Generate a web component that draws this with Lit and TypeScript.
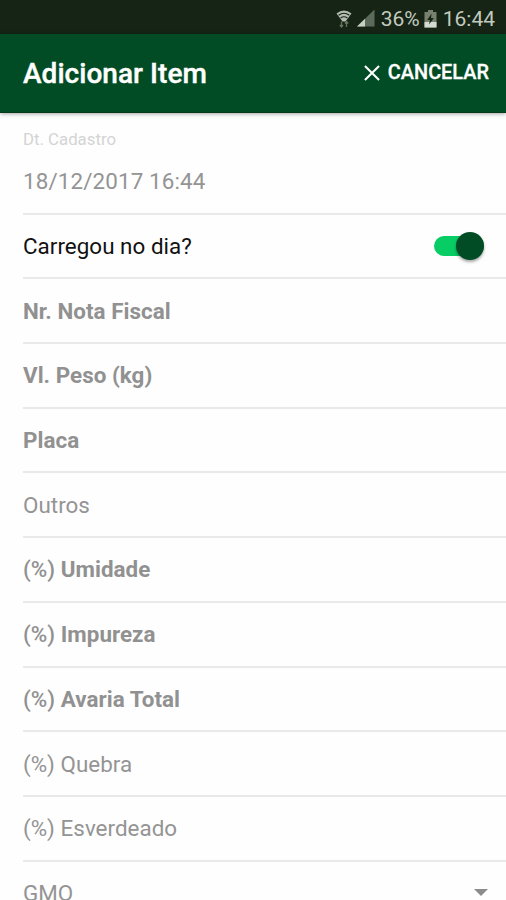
import { LitElement, html, css } from "lit";
import { customElement, property } from "lit/decorators.js";
import { classMap } from "lit/directives/class-map.js";

@customElement("status-bar")
class StatusBar extends LitElement {
  static styles = css`
    :host {
      display: flex;
      align-items: center;
      justify-content: flex-end;
      height: 34px;
      box-sizing: border-box;
      padding: 3px 11px 0 0;
      background: #152414;
      color: #c3cabf;
      font-size: 21px;
      line-height: 30px;
    }
    svg { display: block; flex: none; }
    .wifi { margin-right: 5px; }
    .signal { margin: 0 6px 2px 0; }
    .battery { margin: 0 6px 0 4px; }
  `;
  render() {
    return html`
      <svg class="wifi" width="16" height="20" viewBox="0 0 16 20">
        <path d="M0.500 4.500Q8 -1.500 15.500 4.500L9.500 12.500H6.500Z" fill="#b4bbb0" />
        <path d="M2.600 6.200Q8 2.200 13.400 6.200M4.600 9Q8 6.400 11.400 9" stroke="#152414" stroke-width="1.1" fill="none" />
        <path d="M5.500 12.500v5.500M3.800 16l1.700 2 1.500-2M10.500 18v-5.500M9 14.500l1.500-2 1.700 2" stroke="#68745f" stroke-width="1.3" fill="none" />
      </svg>
      <svg class="signal" width="18" height="18" viewBox="0 0 18 18">
        <path d="M0 17.500L17.500 0.500V17.500Z" fill="#5c6a5b" />
        <path d="M0 17.500L8 9.700V17.500Z" fill="#c8cfc5" />
      </svg>
      <span>36%</span>
      <svg class="battery" width="13" height="18" viewBox="0 0 13 18">
        <path d="M4 0h5v2h3.500v15.500h-12V2H4Z" fill="#78816f" />
        <path d="M0.500 12h12v5.500h-12Z" fill="#d5dbd2" />
        <path d="M7.600 3.500L3.200 10h2.700l-.8 4.500L9.800 8H7Z" fill="#152414" />
      </svg>
      <span>16:44</span>
    `;
  }
}

@customElement("form-row")
class FormRow extends LitElement {
  @property() label = "";
  @property({ type: Boolean }) required = false;
  @property({ type: Boolean }) active = false;

  static styles = css`
    :host {
      display: flex;
      align-items: center;
      justify-content: space-between;
      height: 64.7px;
      box-sizing: border-box;
      margin-left: 23px;
      padding-right: 22px;
      border-bottom: 2px solid #e9e9e9;
    }
    .label {
      color: #949494;
      font-size: 22.4px;
      line-height: 30px;
      letter-spacing: 0.03px;
      white-space: nowrap;
    }
    .required { font-weight: 700; color: #919191; }
    .active { color: #111; }
    .prefix { font-weight: 500; }
  `;
  render() {
    const prefix = this.label.startsWith("(%) ") ? "(%) " : "";
    const rest = this.label.slice(prefix.length);
    return html`
      <span class=${classMap({ label: true, required: this.required, active: this.active })}
        >${prefix && this.required ? html`<span class="prefix">${prefix}</span>` : prefix}${rest}</span
      >
      <slot></slot>
    `;
  }
}

@customElement("app-root")
class AppRoot extends LitElement {
  static styles = css`
    :host {
      display: block;
      height: 900px;
      overflow: hidden;
      background: #fefefe;
      font-family: Roboto, "Liberation Sans", sans-serif;
    }
    header {
      position: relative;
      display: flex;
      align-items: center;
      justify-content: space-between;
      height: 79px;
      box-sizing: border-box;
      padding: 0 17px 0 23px;
      background: #024c25;
      color: #fff;
      border-bottom: 1px solid #083b1c;
      box-shadow: 0 1px 4px rgba(0, 0, 0, 0.35);
    }
    h1 {
      margin: 0;
      padding-top: 2px;
      font-size: 28px;
      font-weight: 500;
      line-height: 36px;
      letter-spacing: 0.04px;
      -webkit-text-stroke: 0.4px #fff;
    }
    .cancel {
      display: flex;
      align-items: center;
      gap: 8px;
      padding: 0;
      border: 0;
      background: none;
      color: #fff;
      font: 500 19.9px/28px Roboto, sans-serif;
      -webkit-text-stroke: 0.3px #fff;
    }
    .date {
      height: 101.7px;
      box-sizing: border-box;
      margin-left: 23px;
      padding-top: 14px;
      border-bottom: 2px solid #e9e9e9;
    }
    .caption { color: #d4d4d4; font-size: 16.800px; line-height: 24px; }
    .value { margin-top: 15px; color: #949494; font-size: 22.400px; line-height: 30px; letter-spacing: 0.12px; }
    .toggle {
      display: flex;
      align-items: center;
      justify-content: flex-end;
      width: 50px;
      height: 20px;
      border-radius: 10px;
      background: #08cc64;
    }
    .thumb {
      flex: none;
      width: 28px;
      height: 28px;
      border-radius: 50%;
      background: #024c25;
      box-shadow: 0 2px 3px rgba(0, 0, 0, 0.35);
    }
    .arrow {
      margin-right: -4px;
      border: 7px solid transparent;
      border-top-color: #8c8c8c;
      border-bottom: 0;
    }
  `;
  private fields = [
    { label: "Nr. Nota Fiscal", required: true },
    { label: "Vl. Peso (kg)", required: true },
    { label: "Placa", required: true },
    { label: "Outros", required: false },
    { label: "(%) Umidade", required: true },
    { label: "(%) Impureza", required: true },
    { label: "(%) Avaria Total", required: true },
    { label: "(%) Quebra", required: false },
    { label: "(%) Esverdeado", required: false },
  ];
  render() {
    return html`
      <status-bar></status-bar>
      <header>
        <h1>Adicionar Item</h1>
        <button class="cancel">
          <svg width="16" height="16" viewBox="0 0 17 17">
            <path d="M1 1L16 16M16 1L1 16" stroke="#fff" stroke-width="2.2" />
          </svg>
          <span>CANCELAR</span>
        </button>
      </header>
      <main>
        <div class="date">
          <div class="caption">Dt. Cadastro</div>
          <div class="value">18/12/2017 16:44</div>
        </div>
        <form-row label="Carregou no dia?" active>
          <div class="toggle"><div class="thumb"></div></div>
        </form-row>
        ${this.fields.map((f) => html`<form-row .label=${f.label} .required=${f.required}></form-row>`)}
        <form-row label="GMO"><div class="arrow"></div></form-row>
      </main>
    `;
  }
}
